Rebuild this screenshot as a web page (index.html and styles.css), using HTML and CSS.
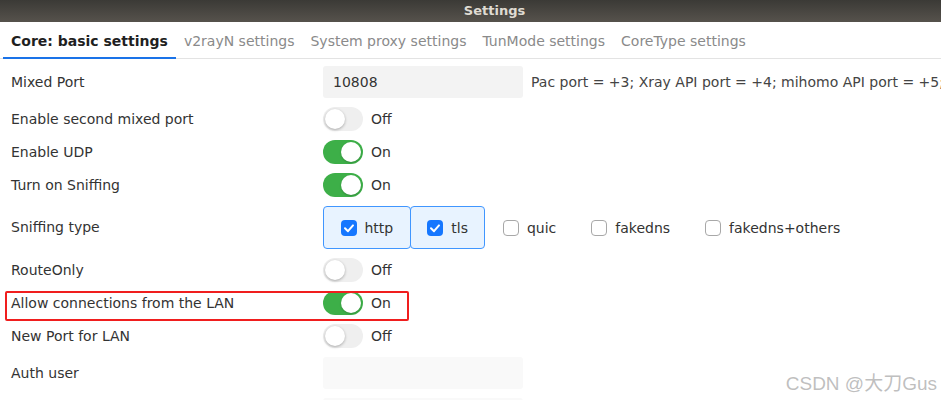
FILE: index.html
```html
<!DOCTYPE html>
<html lang="en">
<head>
<meta charset="utf-8">
<title>Settings</title>
<link rel="stylesheet" href="styles.css">
</head>
<body>
<div class="titlebar"><span class="title">Settings</span></div>
<div class="tabs">
  <div class="tab active">Core: basic settings</div>
  <div class="tab">v2rayN settings</div>
  <div class="tab">System proxy settings</div>
  <div class="tab">TunMode settings</div>
  <div class="tab">CoreType settings</div>
</div>
<div class="form">
  <div class="row">
    <div class="lbl">Mixed Port</div>
    <div class="ctl"><div class="input">10808</div><span class="help">Pac port = +3; Xray API port = +4; mihomo API port = +5;</span></div>
  </div>
  <div class="row">
    <div class="lbl">Enable second mixed port</div>
    <div class="ctl"><span class="switch"></span><span class="state">Off</span></div>
  </div>
  <div class="row">
    <div class="lbl">Enable UDP</div>
    <div class="ctl"><span class="switch on"></span><span class="state">On</span></div>
  </div>
  <div class="row">
    <div class="lbl">Turn on Sniffing</div>
    <div class="ctl"><span class="switch on"></span><span class="state">On</span></div>
  </div>
  <div class="row">
    <div class="lbl">Sniffing type</div>
    <div class="ctl">
      <div class="checks">
        <div class="check checked"><span class="box"><svg viewBox="0 0 16 16" width="16" height="16"><polyline points="4,8.3 7,11.2 12,5.4" fill="none" stroke="#fff" stroke-width="2" stroke-linecap="round" stroke-linejoin="round"/></svg></span><span>http</span></div>
        <div class="check checked"><span class="box"><svg viewBox="0 0 16 16" width="16" height="16"><polyline points="4,8.3 7,11.2 12,5.4" fill="none" stroke="#fff" stroke-width="2" stroke-linecap="round" stroke-linejoin="round"/></svg></span><span>tls</span></div>
        <div class="check"><span class="box"></span><span>quic</span></div>
        <div class="check"><span class="box"></span><span>fakedns</span></div>
        <div class="check"><span class="box"></span><span>fakedns+others</span></div>
      </div>
    </div>
  </div>
  <div class="row">
    <div class="lbl">RouteOnly</div>
    <div class="ctl"><span class="switch"></span><span class="state">Off</span></div>
  </div>
  <div class="row highlight">
    <div class="lbl">Allow connections from the LAN</div>
    <div class="ctl"><span class="switch on"></span><span class="state">On</span></div>
  </div>
  <div class="row">
    <div class="lbl">New Port for LAN</div>
    <div class="ctl"><span class="switch"></span><span class="state">Off</span></div>
  </div>
  <div class="row">
    <div class="lbl">Auth user</div>
    <div class="ctl"><div class="input light"></div></div>
  </div>
  <div class="row">
    <div class="lbl"></div>
    <div class="ctl"><div class="input light"></div></div>
  </div>
</div>
<div class="watermark">CSDN @大刀Gus</div>
</body>
</html>
```
FILE: styles.css
```css
html, body {
  margin: 0;
  padding: 0;
  height: 100%;
  overflow: hidden;
}
body {
  font-family: "DejaVu Sans", "Noto Sans CJK SC", sans-serif;
  font-size: 14px;
  color: #333;
  background: #fff;
  position: relative;
}
.titlebar {
  height: 22px;
  background: linear-gradient(#3b3a36, #56524c);
  display: flex;
  align-items: center;
  justify-content: center;
  padding-left: 48px;
}
.title {
  font-weight: bold;
  font-size: 13px;
  color: #dfdbd2;
  line-height: 16px;
}
.tabs {
  display: flex;
  height: 36px;
  padding-left: 3px;
  border-bottom: 1px solid #e3e3e3;
}
.tab {
  position: relative;
  display: flex;
  align-items: center;
  padding: 2px 8px 0;
  color: #8a8a8a;
  line-height: 17px;
  white-space: nowrap;
}
.tab.active {
  color: #1f1f1f;
  font-weight: bold;
}
.tab.active::after {
  content: "";
  position: absolute;
  left: 0;
  right: 0;
  bottom: -1px;
  height: 2px;
  background: #1a73e8;
}
.form {
  display: flex;
  flex-direction: column;
  gap: 9px;
  padding-top: 7px;
}
.row {
  position: relative;
  display: grid;
  grid-template-columns: 312px 1fr;
  align-items: center;
  padding-left: 11px;
}
.lbl {
  white-space: nowrap;
  line-height: 17px;
}
.ctl {
  display: flex;
  align-items: center;
  gap: 8px;
  white-space: nowrap;
}
.input {
  width: 190px;
  height: 32px;
  padding-left: 10px;
  background: #f3f3f3;
  border-radius: 3px;
  display: flex;
  align-items: center;
  color: #333;
}
.input.light {
  background: #f9f9f9;
}
.help {
  color: #444;
}
.switch {
  position: relative;
  width: 40px;
  height: 24px;
  border-radius: 12px;
  background: #efefef;
  flex: none;
}
.switch::after {
  content: "";
  position: absolute;
  top: 2px;
  left: 2px;
  width: 20px;
  height: 20px;
  border-radius: 50%;
  background: #fff;
  box-shadow: 0 1px 3px rgba(0, 0, 0, 0.3);
}
.switch.on {
  background: #3daf48;
}
.switch.on::after {
  left: 18px;
  box-shadow: 0 1px 2px rgba(0, 0, 0, 0.2);
}
.state {
  color: #333;
}
.checks {
  display: flex;
  height: 43px;
}
.check {
  display: flex;
  align-items: center;
  gap: 8px;
  padding: 0 16.5px;
  border: 1px solid transparent;
  border-radius: 4px;
  color: #333;
}
.check.checked {
  border-color: #4096ff;
  background: #e8f3ff;
}
.check.checked + .check.checked {
  margin-left: -1px;
}
.box {
  width: 16px;
  height: 16px;
  box-sizing: border-box;
  border: 1px solid #a8a8a8;
  border-radius: 4px;
  background: #fff;
  display: flex;
  flex: none;
}
.check.checked .box {
  border: none;
  background: #1677ff;
}
.highlight::after {
  content: "";
  position: absolute;
  left: 5px;
  top: 0;
  width: 404px;
  height: 30px;
  box-sizing: border-box;
  border: 2px solid #f01e1e;
  border-radius: 2px;
  pointer-events: none;
}
.watermark {
  position: absolute;
  right: 4px;
  bottom: 5px;
  font-family: "Liberation Sans", "Noto Sans CJK SC", sans-serif;
  font-size: 19px;
  color: rgba(170, 170, 170, 0.75);
  white-space: nowrap;
}
```
